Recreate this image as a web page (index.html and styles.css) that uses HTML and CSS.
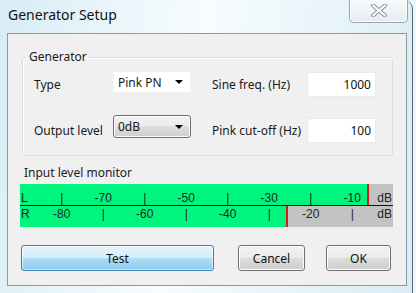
FILE: index.html
```html
<!DOCTYPE html>
<html lang="en">
<head>
  <meta charset="UTF-8" />
  <title>Generator Setup</title>
  <link rel="stylesheet" href="styles.css">
</head>
<body>

  <div class="window">
    <div class="titlebar">
      <span class="title">Generator Setup</span>
      <button type="button" class="close" aria-label="Close">
        <svg width="18" height="13" viewBox="0 0 18 13">
          <path d="M3 1.5 L15 11.5 M15 1.5 L3 11.5" stroke="#8c949b" stroke-width="4" stroke-linecap="round" fill="none" />
          <path d="M3 1.5 L15 11.5 M15 1.5 L3 11.5" stroke="#ffffff" stroke-width="2" stroke-linecap="round" fill="none" />
        </svg>
      </button>
    </div>

    <div class="client">
      <fieldset class="group">
        <legend>Generator</legend>
        <div class="fields">
          <label>Type</label>
          <div class="combo"><span>Pink PN</span><i class="arrow"></i></div>
          <label class="gap">Sine freq. (Hz)</label>
          <input type="text" class="num" value="1000">

          <label>Output level</label>
          <div class="combo focused"><span>0dB</span><i class="arrow"></i></div>
          <label class="gap">Pink cut-off (Hz)</label>
          <input type="text" class="num" value="100">
        </div>
      </fieldset>

      <div class="monitor-title">Input level monitor</div>

      <div class="meter">
        <div class="channel upper" style="--level: 93%">
          <span class="ch">L</span>
          <span>|</span><span>-70</span><span>|</span><span>-50</span>
          <span>|</span><span>-30</span><span>|</span><span>-10</span>
          <span class="unit">dB</span>
        </div>
        <div class="channel lower" style="--level: 71.3%">
          <span class="ch">R</span>
          <span>-80</span><span>|</span><span>-60</span><span>|</span>
          <span>-40</span><span>|</span><span>-20</span><span>|</span>
          <span class="unit">dB</span>
        </div>
      </div>

      <div class="buttons">
        <button type="button" class="btn default">Test</button>
        <button type="button" class="btn cancel">Cancel</button>
        <button type="button" class="btn ok">OK</button>
      </div>
    </div>
  </div>

</body>
</html>
```

FILE: styles.css
```css
html, body {
  margin: 0;
  padding: 0;
}

body {
  width: 416px;
  height: 293px;
  overflow: hidden;
  background: #eef7fb;
  font-family: 'Noto Sans', 'Open Sans', sans-serif;
  font-size: 12px;
  color: #1a1a1a;
}

.window {
  width: 413px;
  height: 300px;
  border-right: 1px solid #55616b;
  border-top-right-radius: 9px;
  background: linear-gradient(100deg, #d6ecf6 0%, #eaf6fb 25%, #f7fcfe 45%, #e9f5fa 70%, #d9ecf5 100%);
  box-sizing: border-box;
}

.titlebar {
  height: 33px;
  display: flex;
  align-items: flex-start;
  justify-content: space-between;
}

.title {
  font-size: 14px;
  line-height: 20px;
  margin: 5px 0 0 8px;
  color: #111;
}

.close {
  width: 59px;
  height: 23px;
  margin-right: 4px;
  padding: 0;
  border: 1px solid #9aa6b0;
  border-top: none;
  border-radius: 0 0 5px 5px;
  background: linear-gradient(#f6f9fb, #e6edf2);
  box-shadow: inset 0 0 0 1px rgba(255,255,255,0.7);
  display: flex;
  align-items: center;
  justify-content: center;
}

.close svg {
  display: block;
  margin-top: -1px;
}

.client {
  margin-left: 7px;
  width: 400px;
  height: 253px;
  box-sizing: border-box;
  border: 1px solid #8d99a3;
  background: #f0f0f0;
  padding-top: 1px;
}

/* group box */
.group {
  margin: 14px 0 0 14px;
  width: 371px;
  box-sizing: border-box;
  border: 1px solid #d5dfe5;
  border-radius: 3px;
  padding: 7px 0 12px 0;
  box-shadow: inset 1px 1px 0 #fff;
}

.group legend {
  margin-left: 4px;
  padding: 0 2px;
  line-height: 16px;
}

.fields {
  margin-left: 11px;
  display: grid;
  grid-template-columns: 79px 78px 116px 69px;
  grid-template-rows: 25px 25px;
  row-gap: 21px;
  align-items: center;
}

.fields label {
  white-space: nowrap;
}

.fields .gap {
  margin-left: 21px;
}

.fields label + .combo {
  align-self: start;
}

.combo {
  height: 22px;
  box-sizing: border-box;
  border: 1px solid #f0f0f0;
  background: #fff;
  display: flex;
  align-items: center;
  justify-content: space-between;
  padding: 0 7px 0 4px;
  margin-top: -1px;
}

.combo.focused {
  height: 23px;
  border: 1px solid #707070;
  border-radius: 3px;
  background: linear-gradient(#f2f2f2 0%, #ebebeb 50%, #dddddd 50%, #cfcfcf 100%);
  box-shadow: inset 0 0 0 1px #fbfbfb;
  margin-top: -3px;
}

.arrow {
  width: 0;
  height: 0;
  border-left: 4px solid transparent;
  border-right: 4px solid transparent;
  border-top: 4px solid #000;
}

.num {
  width: 69px;
  height: 25px;
  box-sizing: border-box;
  border: 1px solid #e8eaec;
  background: #fff;
  font-family: inherit;
  font-size: 12px;
  text-align: right;
  padding: 0 4px 0 0;
  color: #111;
}

.monitor-title {
  margin: 9px 0 0 16px;
  line-height: 16px;
}

/* level meter */
.meter {
  margin: 3px 0 0 12px;
  width: 373px;
  font-family: 'Liberation Sans', Arial, sans-serif;
  font-size: 12px;
  color: #222;
}

.channel {
  height: 21px;
  display: grid;
  grid-template-columns: 21px repeat(8, 1fr) 20px;
  background: linear-gradient(90deg, #00f57f 0, #00f57f var(--level), #d81a1a var(--level), #d81a1a calc(var(--level) + 2px), #c3c3c3 calc(var(--level) + 2px));
}

.channel span {
  text-align: center;
  line-height: 12px;
}

.channel .ch {
  text-align: left;
  padding-left: 1px;
}

.channel .unit {
  text-align: right;
  padding-right: 1px;
}

.channel.upper {
  align-items: end;
  padding-bottom: 1px;
  box-sizing: border-box;
  border-bottom: 1px solid #111;
  height: 22px;
}

.channel.lower {
  align-items: start;
  padding-top: 2px;
  box-sizing: border-box;
}

/* buttons */
.buttons {
  display: flex;
  margin: 18px 0 0 13px;
}

.btn {
  height: 26px;
  font-family: inherit;
  font-size: 12px;
  color: #111;
  border: 1px solid #707070;
  border-radius: 3px;
  background: linear-gradient(#f2f2f2 0%, #ebebeb 50%, #dddddd 50%, #cfcfcf 100%);
  box-shadow: inset 0 0 0 1px #fcfcfc;
  padding: 0;
}

.btn.default {
  width: 193px;
  border-color: #3c7fb1;
  background: linear-gradient(#e6f4fc 0%, #d3edfb 50%, #b3def6 50%, #8ac8ee 100%);
  box-shadow: inset 0 0 0 1px rgba(255,255,255,0.6);
}

.btn.cancel {
  width: 67px;
  margin-left: 24px;
}

.btn.ok {
  width: 65px;
  margin-left: 21px;
}
```
